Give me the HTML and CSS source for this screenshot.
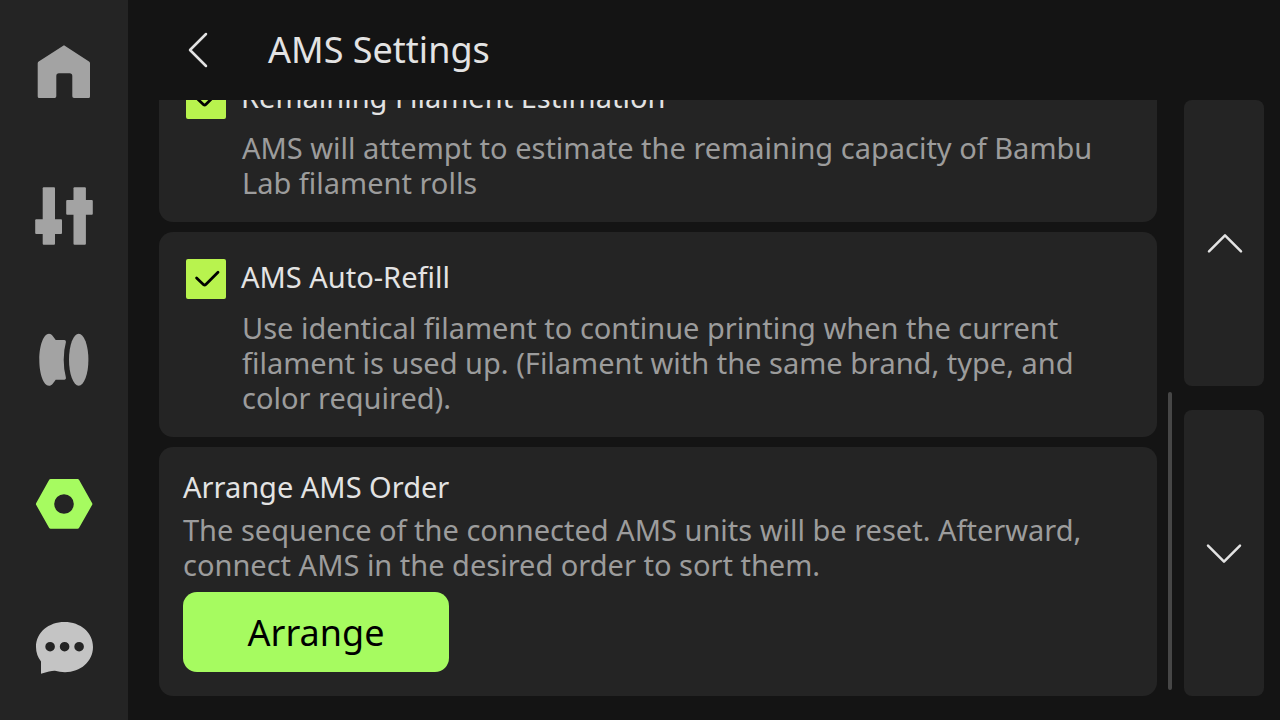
FILE: index.html
```html
<!DOCTYPE html>
<html lang="en">
<head>
<meta charset="utf-8">
<meta name="viewport" content="width=device-width, initial-scale=1">
<title>AMS Settings</title>
<link rel="stylesheet" href="styles.css">
</head>
<body>
<div class="app">
  <nav class="sidebar" aria-label="Main">
    <button class="nav-item" type="button" aria-label="Home">
      <svg class="nav-icon" viewBox="0 0 64 64"><path d="M32 5.3 57 21.5Q58 22.2 58 23.2V56.5Q58 58 56.5 58H42Q40.3 58 40.3 56.3V36Q40.3 33.3 37.6 33.3H27Q24.3 33.3 24.3 36V56.3Q24.3 58 22.6 58H7.2Q5.7 58 5.7 56.5V23.2Q5.7 22.2 6.7 21.5Z"/></svg>
    </button>
    <button class="nav-item" type="button" aria-label="Controls">
      <svg class="nav-icon" viewBox="0 0 64 64"><rect x="10.7" y="3.3" width="12.3" height="57.4" rx="1"/><rect x="3.2" y="35.3" width="26.8" height="14.7" rx="1"/><rect x="41.5" y="3.3" width="12.4" height="57.4" rx="1"/><rect x="34.2" y="16" width="26.6" height="14.8" rx="1"/></svg>
    </button>
    <button class="nav-item" type="button" aria-label="Filament">
      <svg class="nav-icon" viewBox="0 0 64 64"><path d="M17 5.7C20 5.7 21.3 8.8 23.7 12H32.5Q34.4 12.2 33.9 14.3Q31.7 22 31.7 31.8T33.9 49.5Q34.4 51.6 32.5 51.7H23.7C21.3 55 20 57.7 17 57.7C11.5 57.7 7.3 46 7.3 31.7S11.5 5.7 17 5.7Z"/><ellipse cx="46.7" cy="31.7" rx="9.7" ry="26"/></svg>
    </button>
    <button class="nav-item nav-item--active" type="button" aria-label="Settings" aria-current="page">
      <svg class="nav-icon" viewBox="0 0 64 64"><path fill-rule="evenodd" d="M18.6 7H45.6Q46.5 7 47 7.8L60.2 31.2Q60.6 32 60.2 32.8L47 56Q46.5 56.8 45.6 56.8H18.6Q17.7 56.8 17.2 56L4.1 32.8Q3.7 32 4.1 31.2L17.2 7.8Q17.7 7 18.6 7ZM32 22.2A9.8 9.8 0 1 0 32 41.8A9.8 9.8 0 1 0 32 22.2Z"/></svg>
    </button>
    <button class="nav-item nav-item--light" type="button" aria-label="Messages">
      <svg class="nav-icon" viewBox="0 0 64 64"><path fill-rule="evenodd" d="M32.5 6C48.5 6 61 16.5 61 31S48.5 56.2 33 56.2Q27.5 56.2 23 54.8Q19.5 54.4 9 57.7V45.5Q4 39 4 31C4 16.5 16.5 6 32.5 6ZM18.1 25.9A4.8 4.8 0 1 0 18.1 35.5A4.8 4.8 0 1 0 18.1 25.9ZM32.6 25.9A4.8 4.8 0 1 0 32.6 35.5A4.8 4.8 0 1 0 32.6 25.9ZM47.1 25.9A4.8 4.8 0 1 0 47.1 35.5A4.8 4.8 0 1 0 47.1 25.9Z"/></svg>
    </button>
  </nav>

  <main class="main">
    <header class="header">
      <button class="back" type="button" aria-label="Back">
        <svg class="chevron" viewBox="0 0 40 40"><path d="M27 4 11 20 27 36"/></svg>
      </button>
      <h1 class="title">AMS Settings</h1>
    </header>

    <div class="body">
      <div class="list">
        <section class="card card--option">
          <div class="option-head">
            <span class="check">
              <input class="check-box" type="checkbox" id="remaining" checked>
              <svg class="check-mark" viewBox="0 0 40 40"><path d="M10.6 19 17.6 25.7Q18.7 26.5 19.8 25.5L32 13.3"/></svg>
            </span>
            <label class="card-title" for="remaining">Remaining Filament Estimation</label>
          </div>
          <p class="text">AMS will attempt to estimate the remaining capacity of Bambu Lab filament rolls</p>
        </section>

        <section class="card card--option">
          <div class="option-head">
            <span class="check">
              <input class="check-box" type="checkbox" id="refill" checked>
              <svg class="check-mark" viewBox="0 0 40 40"><path d="M10.6 19 17.6 25.7Q18.7 26.5 19.8 25.5L32 13.3"/></svg>
            </span>
            <label class="card-title" for="refill">AMS Auto-Refill</label>
          </div>
          <p class="text">Use identical filament to continue printing when the current filament is used up. (Filament with the same brand, type, and color required).</p>
        </section>

        <section class="card card--action">
          <div class="copy">
            <h2 class="card-title">Arrange AMS Order</h2>
            <p class="text">The sequence of the connected AMS units will be reset. Afterward, connect AMS in the desired order to sort them.</p>
          </div>
          <button class="action" type="button">Arrange</button>
        </section>
      </div>

      <div class="track"><div class="thumb"></div></div>

      <div class="pager">
        <button class="page" type="button" aria-label="Scroll up">
          <svg class="chevron" viewBox="0 0 40 40"><path d="M5 28.3 21 12.3 37 28.3"/></svg>
        </button>
        <button class="page" type="button" aria-label="Scroll down">
          <svg class="chevron" viewBox="0 0 40 40"><path d="M4 12.7 20 28.7 36 12.7"/></svg>
        </button>
      </div>
    </div>
  </main>
</div>
</body>
</html>
```
FILE: styles.css
```css
* {
  box-sizing: border-box;
}

body {
  margin: 0;
  background: #141414;
  color: #e3e3e3;
  font-family: "Noto Sans", "Open Sans", sans-serif;
}

button {
  border: 0;
  padding: 0;
  font-family: inherit;
}

h1,
h2,
p {
  margin: 0;
  font-weight: 400;
}

.app {
  display: flex;
  height: 100vh;
}

.sidebar {
  flex: none;
  display: flex;
  flex-direction: column;
  width: 128px;
  background: #242424;
}

.nav-item {
  flex: 1;
  display: grid;
  place-items: center;
  background: none;
  color: #a3a3a3;
}

.nav-item--active {
  color: #a6fb60;
}

.nav-item--light {
  color: #c4c4c4;
}

.nav-icon {
  width: 64px;
  height: 64px;
  fill: currentColor;
}

.main {
  flex: 1;
  min-width: 0;
  display: flex;
  flex-direction: column;
}

.header {
  flex: none;
  display: flex;
  align-items: center;
  gap: 49px;
  height: 100px;
  padding-left: 51px;
}

.back {
  display: grid;
  background: none;
}

.chevron {
  width: 40px;
  height: 40px;
  fill: none;
  stroke: #e3e3e3;
  stroke-width: 2.5;
  stroke-linecap: round;
  stroke-linejoin: round;
}

.title {
  font-size: 36px;
  line-height: 48px;
}

.body {
  flex: 1;
  min-height: 0;
  display: flex;
  padding: 0 16px 24px 31px;
}

.list {
  flex: 1;
  min-width: 0;
  display: flex;
  flex-direction: column;
  justify-content: flex-end;
  gap: 10px;
  overflow: hidden;
}

.card {
  flex: none;
  display: flex;
  flex-direction: column;
  border-radius: 14px;
  background: #242424;
}

.card--option {
  gap: 11px;
  padding: 27px 27px 22px;
}

.card--option .text {
  padding-left: 56px;
}

.card--action {
  gap: 10px;
  padding: 22px 24px 24px;
}

.copy {
  display: flex;
  flex-direction: column;
  gap: 8px;
}

.option-head {
  display: flex;
  align-items: flex-start;
  gap: 15px;
}

.card-title {
  font-size: 29px;
  line-height: 35px;
}

.text {
  color: #9c9c9c;
  font-size: 29px;
  line-height: 35px;
}

.check {
  display: grid;
  width: 40px;
  height: 40px;
}

.check-box,
.check-mark {
  grid-area: 1 / 1;
  width: 40px;
  height: 40px;
}

.check-box {
  appearance: none;
  margin: 0;
  border-radius: 2px;
  background: #b8f34e;
}

.check-mark {
  fill: none;
  stroke: #000;
  stroke-width: 2.8;
  stroke-linecap: round;
  pointer-events: none;
}

.action {
  align-self: flex-start;
  width: 266px;
  height: 80px;
  border-radius: 14px;
  background: #a6fb60;
  color: #000;
  font-size: 36px;
}

.track {
  flex: none;
  display: flex;
  align-items: flex-end;
  width: 4px;
  margin: 0 12px 0 11px;
}

.thumb {
  width: 4px;
  height: 50%;
  margin-bottom: 6px;
  border-radius: 2px;
  background: #464646;
}

.pager {
  flex: none;
  display: flex;
  flex-direction: column;
  gap: 24px;
  width: 80px;
}

.page {
  flex: 1;
  display: grid;
  place-items: center;
  border-radius: 8px;
  background: #242424;
}
```
